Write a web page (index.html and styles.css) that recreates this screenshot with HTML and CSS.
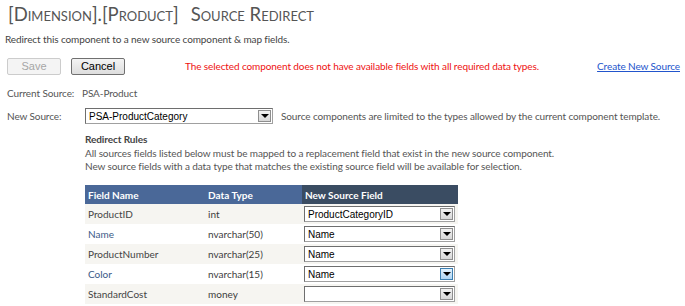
FILE: index.html
```html
<!DOCTYPE html>
<html>
<head>
    <title>Source Redirect</title>
    <link rel="stylesheet" href="styles.css">
</head>
<body>
    <h1 class="page-title">[Dimension].[Product]<span class="title-gap"></span>Source Redirect</h1>
    <p class="intro">Redirect this component to a new source component &amp; map fields.</p>

    <div class="actions">
        <button class="btn" disabled>Save</button>
        <button class="btn">Cancel</button>
        <span class="error-msg">The selected component does not have available fields with all required data types.</span>
        <a href="#" class="create-link">Create New Source</a>
    </div>

    <div class="form-row current-source">
        <div class="form-label">Current Source:</div>
        <div class="form-value">PSA-Product</div>
    </div>
    <div class="form-row new-source">
        <div class="form-label">New Source:</div>
        <div class="combo combo-wide">
            <span class="combo-text">PSA-ProductCategory</span>
            <span class="combo-btn"></span>
        </div>
        <span class="hint">Source components are limited to the types allowed by the current component template.</span>
    </div>

    <div class="rules">
        <h2>Redirect Rules</h2>
        <p>All sources fields listed below must be mapped to a replacement field that exist in the new source component.<br>
        New source fields with a data type that matches the existing source field will be available for selection.</p>

        <table class="map-table">
            <thead>
                <tr>
                    <th class="col-name">Field Name</th>
                    <th class="col-type">Data Type</th>
                    <th class="col-new">New Source Field</th>
                </tr>
            </thead>
            <tbody>
                <tr>
                    <td>ProductID</td>
                    <td>int</td>
                    <td><div class="combo"><span class="combo-text">ProductCategoryID</span><span class="combo-btn"></span></div></td>
                </tr>
                <tr class="alt">
                    <td>Name</td>
                    <td>nvarchar(50)</td>
                    <td><div class="combo"><span class="combo-text">Name</span><span class="combo-btn"></span></div></td>
                </tr>
                <tr>
                    <td>ProductNumber</td>
                    <td>nvarchar(25)</td>
                    <td><div class="combo"><span class="combo-text">Name</span><span class="combo-btn"></span></div></td>
                </tr>
                <tr class="alt">
                    <td>Color</td>
                    <td>nvarchar(15)</td>
                    <td><div class="combo"><span class="combo-text">Name</span><span class="combo-btn hover"></span></div></td>
                </tr>
                <tr>
                    <td>StandardCost</td>
                    <td>money</td>
                    <td><div class="combo"><span class="combo-text"></span><span class="combo-btn"></span></div></td>
                </tr>
            </tbody>
        </table>
    </div>
</body>
</html>
```

FILE: styles.css
```css
* {
    margin: 0;
    padding: 0;
    box-sizing: border-box;
}

body {
    font-family: 'Lato', 'Open Sans', sans-serif;
    font-size: 10px;
    letter-spacing: -0.1px;
    color: #444444;
    background-color: #FFFFFF;
    padding: 0 5px 0 7px;
}

.page-title {
    font-size: 18.5px;
    font-weight: normal;
    font-variant: small-caps;
    letter-spacing: 0;
    color: #555555;
    padding: 3px 0 0 1px;
    height: 33px;
}

.title-gap {
    display: inline-block;
    width: 12px;
}

.intro {
    margin-left: -2px;
    height: 18px;
}

.actions {
    display: flex;
    align-items: center;
    height: 30px;
}

.btn {
    width: 54px;
    height: 17px;
    font-family: 'Liberation Sans', Arial, sans-serif;
    font-size: 11px;
    letter-spacing: 0;
    color: #000000;
    border: 1px solid #707070;
    border-radius: 2px;
    background: linear-gradient(#F4F4F4, #DDDDDD);
    margin-right: 10px;
}

.btn:disabled {
    color: #A6A6A6;
    border-color: #CCCCCC;
    background: #F4F4F4;
}

.error-msg {
    color: #EE1111;
    margin-left: 50px;
}

.create-link {
    margin-left: auto;
    color: #2255CC;
    text-decoration: underline;
}

.form-row {
    display: flex;
    align-items: center;
    height: 22px;
}

.current-source {
    margin-top: 1px;
}

.form-label {
    width: 78px;
    color: #555555;
}

.form-value {
    margin-left: -3px;
    color: #555555;
}

.new-source {
    height: 24px;
}

.hint {
    margin-left: 8px;
    color: #555555;
}

.combo {
    display: flex;
    align-items: center;
    height: 16px;
    width: 151px;
    border: 1px solid #A0A0A0;
    border-top-color: #6E6E6E;
    border-left-color: #6E6E6E;
    background: #FFFFFF;
    padding: 0 1px 0 3px;
}

.combo-wide {
    width: 188px;
}

.combo-text {
    flex: 1;
    font-family: 'Liberation Sans', Arial, sans-serif;
    font-size: 10px;
    letter-spacing: 0;
    color: #000000;
}

.combo-btn {
    position: relative;
    width: 13px;
    height: 12px;
    border: 1px solid #8E8E8E;
    background: linear-gradient(#F2F2F2, #D8D8D8);
}

.combo-btn::after {
    content: '';
    position: absolute;
    left: 2px;
    top: 3px;
    border-left: 4px solid transparent;
    border-right: 4px solid transparent;
    border-top: 4px solid #000000;
}

.combo-btn.hover {
    border-color: #3C7FB1;
    background: linear-gradient(#E3F2FD, #AFD6F5);
}

.rules {
    margin-left: 78px;
    padding-top: 4px;
}

.rules h2 {
    font-size: 10px;
    font-weight: bold;
    color: #444444;
    line-height: 15px;
}

.rules p {
    line-height: 13px;
    color: #555555;
}

.map-table {
    margin-top: 12px;
    border-collapse: collapse;
    width: 373px;
    font-size: 10px;
    letter-spacing: 0;
}

.map-table th {
    text-align: left;
    font-weight: bold;
    color: #FFFFFF;
    background-color: #4A6898;
    height: 19px;
    padding: 0 3px;
}

.map-table th.col-new {
    background-color: #3A4C62;
}

.col-name {
    width: 120px;
}

.col-type {
    width: 97px;
}

.map-table td {
    height: 20px;
    padding: 0 3px;
    color: #3C3C3C;
    background-color: #F6F5F1;
}

.map-table td:first-child {
    color: #444444;
}

.map-table tr.alt td {
    background-color: #FFFFFF;
}

.map-table tr.alt td:first-child {
    color: #3A5A86;
}

.map-table td:last-child {
    padding: 0 3px 0 2px;
}
```
